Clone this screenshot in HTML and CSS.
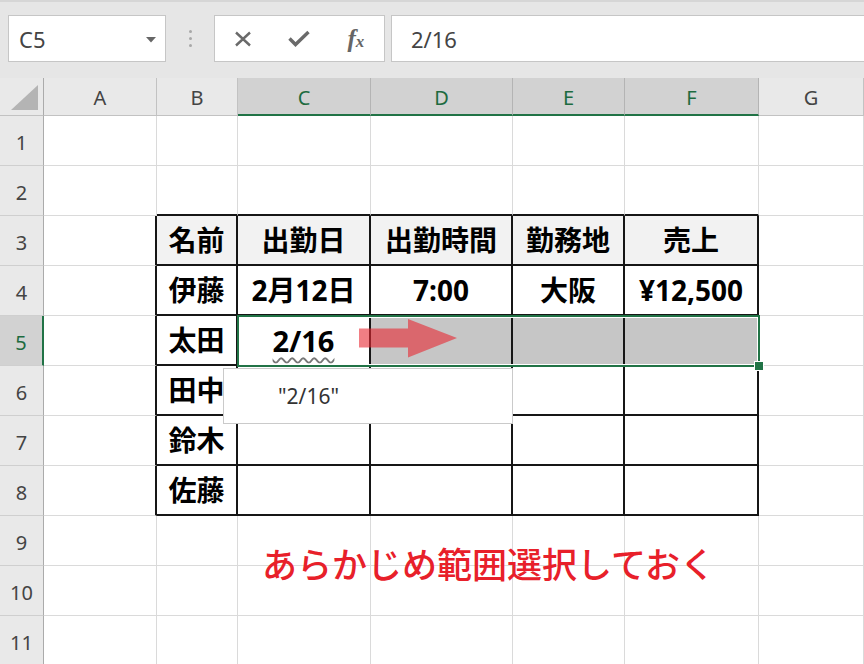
FILE: index.html
```html
<!DOCTYPE html>
<html lang="ja">
<head>
<meta charset="utf-8">
<title>Excel</title>
<link rel="stylesheet" href="styles.css">
</head>
<body>
<div class="toolbar">
  <div class="namebox"><span>C5</span><svg class="dd" width="10" height="6" viewBox="0 0 10 6"><polygon points="0,0 10,0 5,5.5" fill="#666"/></svg></div>
  <div class="sep"><i></i><i></i><i></i></div>
  <div class="fbtns">
    <span class="slot"><svg width="18" height="16" viewBox="0 0 18 16"><path d="M2 1.5 L16 14.5 M16 1.5 L2 14.5" stroke="#6a6a6a" stroke-width="2.4" fill="none"/></svg></span>
    <span class="slot"><svg width="22" height="17" viewBox="0 0 22 17"><path d="M1.5 8.5 L7.5 14.5 L20.5 2" stroke="#6a6a6a" stroke-width="3.4" fill="none"/></svg></span>
    <span class="slot fx"><i>f</i><i class="x">x</i></span>
  </div>
  <div class="fbar">2/16</div>
</div>
<div class="sheet">
  <div class="cells">
    <div class="ch corner"><svg width="28" height="26" viewBox="0 0 28 26"><polygon points="27,0 27,25 0,25" fill="#b4b4b4"/></svg></div>
    <div class="ch">A</div><div class="ch">B</div><div class="ch sel">C</div><div class="ch sel">D</div><div class="ch sel">E</div><div class="ch sel">F</div><div class="ch">G</div>

    <div class="rh">1</div><div class="c"></div><div class="c"></div><div class="c"></div><div class="c"></div><div class="c"></div><div class="c"></div><div class="c"></div>

    <div class="rh">2</div><div class="c"></div><div class="c tb"></div><div class="c tb"></div><div class="c tb"></div><div class="c tb"></div><div class="c tb"></div><div class="c"></div>

    <div class="rh">3</div><div class="c lb"></div><div class="c t th">名前</div><div class="c t th">出勤日</div><div class="c t th">出勤時間</div><div class="c t th">勤務地</div><div class="c t th">売上</div><div class="c"></div>

    <div class="rh">4</div><div class="c lb"></div><div class="c t">伊藤</div><div class="c t">2月12日</div><div class="c t">7:00</div><div class="c t">大阪</div><div class="c t">¥12,500</div><div class="c"></div>

    <div class="rh rs">5</div><div class="c lb"></div><div class="c t">太田</div><div class="c t"><span class="wavy">2/16</span></div><div class="c t g"></div><div class="c t g"></div><div class="c t g"></div><div class="c"></div>

    <div class="rh">6</div><div class="c lb"></div><div class="c t">田中</div><div class="c t"></div><div class="c t"></div><div class="c t"></div><div class="c t"></div><div class="c"></div>

    <div class="rh">7</div><div class="c lb"></div><div class="c t">鈴木</div><div class="c t"></div><div class="c t"></div><div class="c t"></div><div class="c t"></div><div class="c"></div>

    <div class="rh">8</div><div class="c lb"></div><div class="c t">佐藤</div><div class="c t"></div><div class="c t"></div><div class="c t"></div><div class="c t"></div><div class="c"></div>

    <div class="rh">9</div><div class="c"></div><div class="c"></div><div class="c"></div><div class="c"></div><div class="c"></div><div class="c"></div><div class="c"></div>

    <div class="rh">10</div><div class="c"></div><div class="c"></div><div class="c"></div><div class="c"></div><div class="c"></div><div class="c"></div><div class="c"></div>

    <div class="rh">11</div><div class="c"></div><div class="c"></div><div class="c"></div><div class="c"></div><div class="c"></div><div class="c"></div><div class="c"></div>
  </div>
  <div class="overlay">
    <div class="selbox"><span class="handle"></span></div>
    <div class="note">あらかじめ範囲選択しておく</div>
    <svg class="arrow" width="99" height="39" viewBox="0 0 99 39"><polygon points="0,9.5 49,9.5 49,0 98,19 49,38.5 49,28.5 0,28.5" fill="rgba(232,40,50,0.6)"/></svg>
    <div class="tip">"2/16"</div>
  </div>
</div>
</body>
</html>
```
FILE: styles.css
```css
* { box-sizing: border-box; }
html, body { margin: 0; height: 100%; overflow: hidden; background: #fff; }
body { font-family: "Noto Sans", "Noto Sans CJK JP", sans-serif; }

.toolbar {
  height: 78px;
  background: #e6e6e6;
  border-top: 2px solid #d6d6d6;
  display: flex;
  align-items: flex-start;
  padding: 13px 0 0 8px;
}
.namebox {
  width: 158px;
  height: 47px;
  background: #fff;
  border: 1px solid #c6c6c6;
  display: flex;
  align-items: center;
  justify-content: space-between;
  padding: 0 9px 0 10px;
  font-size: 22px;
  color: #444;
}
.dd { margin-top: 2px; }
.sep {
  width: 48px;
  height: 47px;
  display: flex;
  flex-direction: column;
  align-items: center;
  justify-content: center;
  gap: 4px;
}
.sep i { width: 3px; height: 3px; background: #a8a8a8; border-radius: 50%; }
.fbtns {
  width: 171px;
  height: 47px;
  background: #fff;
  border: 1px solid #c6c6c6;
  display: flex;
  align-items: center;
}
.slot { width: 57px; display: flex; align-items: center; justify-content: center; }
.fx { font-family: "Liberation Serif", serif; font-style: italic; font-weight: 700; color: #666; font-size: 25px; line-height: 1; }
.fx i { font-style: italic; }
.fx .x { font-size: 17px; margin-left: 0; margin-top: 6px; }
.fbar {
  flex: 1;
  margin-left: 6px;
  height: 47px;
  background: #fff;
  border: 1px solid #c6c6c6;
  border-right: 0;
  padding-left: 19px;
  display: flex;
  align-items: center;
  font-size: 22px;
  color: #444;
}

.sheet { display: grid; position: relative; }
.cells, .overlay {
  grid-area: 1 / 1;
  display: grid;
  grid-template-columns: 44px 113px 81px 133px 142px 112px 134px 1fr;
  grid-template-rows: 38px repeat(11, 50px);
}
.overlay { position: relative; pointer-events: none; }

.ch, .rh {
  background: #e9e9e9;
  border-right: 1px solid #c2c2c2;
  border-bottom: 1px solid #c2c2c2;
  display: flex;
  align-items: center;
  justify-content: center;
  font-size: 20px;
  color: #444;
}
.ch { padding-top: 2px; }
.rh { padding-top: 3px; }
.corner { align-items: flex-end; justify-content: flex-end; padding: 0 4px 4px 0; border-right-color: #ababab; }
.rh { border-right-color: #ababab; border-bottom-color: #cfcfcf; }
.ch.sel { background: #d2d2d2; color: #1d6b40; border-bottom: 2px solid #217346; border-right-color: #b4b4b4; }
.rh.rs { background: #d2d2d2; color: #1d6b40; border-right: 2px solid #217346; }

.c {
  border-right: 1px solid #dadada;
  border-bottom: 1px solid #dadada;
  display: flex;
  align-items: center;
  justify-content: center;
  font-weight: 700;
  font-size: 28px;
  color: #000;
  line-height: 1;
}
.c.t { border-right: 2px solid #161616; border-bottom: 2px solid #161616; }
.c.th { background: #f2f2f2; }
.c.lb { border-right: 2px solid #161616; }
.c.tb { border-bottom: 2px solid #161616; }
.c.g { background: #c6c6c6; }
.wavy {
  font-size: 29px;
  text-decoration: underline wavy #777;
  text-decoration-thickness: 1.5px;
  text-underline-offset: 5px;
}

.selbox {
  grid-row: 6;
  grid-column: 4 / 8;
  margin: -1px -1px -1px -1px;
  border: 2px solid #217346;
  box-shadow: inset 0 0 0 1px #fff;
  position: relative;
}
.handle {
  position: absolute;
  right: -5px;
  bottom: -5px;
  width: 8px;
  height: 8px;
  background: #217346;
  outline: 1px solid #fff;
}
.note {
  grid-row: 10 / 12;
  grid-column: 4 / 9;
  align-self: center;
  margin-bottom: 8px;
  padding-left: 24px;
  font-family: "Noto Sans CJK JP", sans-serif;
  font-weight: 500;
  font-size: 35px;
  line-height: 1;
  color: #e8202a;
}
.arrow { position: absolute; left: 359px; top: 241px; }
.tip {
  position: absolute;
  left: 223px;
  top: 290px;
  width: 290px;
  height: 56px;
  background: #fff;
  border: 1px solid #cacaca;
  display: flex;
  align-items: center;
  padding-left: 54px;
  font-size: 21px;
  color: #333;
}
```
